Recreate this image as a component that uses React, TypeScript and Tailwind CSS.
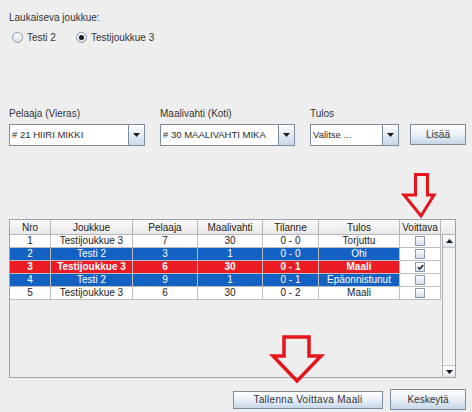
import React from "react";

type Tone = "plain" | "blue" | "red";

interface Shot {
  nro: number;
  team: string;
  player: number;
  keeper: number;
  score: string;
  result: string;
  winner: boolean;
  tone: Tone;
}

const SHOTS: Shot[] = [
  { nro: 1, team: "Testijoukkue 3", player: 7, keeper: 30, score: "0 - 0", result: "Torjuttu", winner: false, tone: "plain" },
  { nro: 2, team: "Testi 2", player: 3, keeper: 1, score: "0 - 0", result: "Ohi", winner: false, tone: "blue" },
  { nro: 3, team: "Testijoukkue 3", player: 6, keeper: 30, score: "0 - 1", result: "Maali", winner: true, tone: "red" },
  { nro: 4, team: "Testi 2", player: 9, keeper: 1, score: "0 - 1", result: "Epäonnistunut", winner: false, tone: "blue" },
  { nro: 5, team: "Testijoukkue 3", player: 6, keeper: 30, score: "0 - 2", result: "Maali", winner: false, tone: "plain" },
];

const HEADERS = ["Nro", "Joukkue", "Pelaaja", "Maalivahti", "Tilanne", "Tulos", "Voittava"];
const WIDTHS = ["w-[41px]", "w-[82px]", "w-[65px]", "w-[65px]", "w-[56px]", "w-[81px]", "w-[41px]"];

const TONE_CLASS: Record<Tone, string> = {
  plain: "bg-white text-[#222]",
  blue: "bg-[#1461c4] text-white",
  red: "bg-[#ec1c24] text-white font-bold",
};

function Triangle({ up = false }: { up?: boolean }) {
  return (
    <svg width="7" height="4" viewBox="0 0 7 4">
      <path d={up ? "M0 4h7L3.5 0z" : "M0 0h7L3.5 4z"} fill="#1a1a1a" />
    </svg>
  );
}

function Combo({ text, width }: { text: string; width: string }) {
  return (
    <div className={`flex h-[22px] ${width} border border-[#7d8c9c] bg-white`}>
      <div className="flex flex-1 items-center overflow-hidden whitespace-nowrap pl-[2px] text-[9.5px] text-[#2a2a2a]">
        {text}
      </div>
      <div className="flex w-[16px] items-center justify-center border-l border-[#7d8c9c] bg-gradient-to-b from-[#ffffff] to-[#c9d8e8]">
        <Triangle />
      </div>
    </div>
  );
}

function Button({ label, className }: { label: string; className: string }) {
  return (
    <div
      className={`flex items-center justify-center border border-[#7d8c9c] bg-gradient-to-b from-[#ffffff] via-[#e9f0f7] to-[#c6d6e7] text-[10px] text-[#333] ${className}`}
    >
      {label}
    </div>
  );
}

function Radio({ checked }: { checked: boolean }) {
  return (
    <div className="flex h-[11px] w-[11px] items-center justify-center rounded-full border border-[#8a9aab] bg-gradient-to-b from-[#ffffff] to-[#d6e0eb]">
      {checked && <div className="h-[5px] w-[5px] rounded-full bg-[#1a1a1a]" />}
    </div>
  );
}

function CheckBox({ checked }: { checked: boolean }) {
  return (
    <div className="flex h-[10px] w-[10px] items-center justify-center border border-[#8a9aab] bg-gradient-to-b from-[#ffffff] to-[#d3deea]">
      {checked && (
        <svg width="7" height="6" viewBox="0 0 7 6">
          <path d="M1 3.2L2.8 5L6.2 1" stroke="#1a1a1a" strokeWidth="1.4" fill="none" />
        </svg>
      )}
    </div>
  );
}

function ShotTable() {
  return (
    <div className="flex h-[159px] w-[447px] flex-col border border-[#9aa3ad] bg-[#eeeeee]">
      {/* header */}
      <div className="flex h-[15px]">
        {HEADERS.map((h, i) => (
          <div
            key={h}
            className={`flex ${WIDTHS[i]} items-center justify-center border-b border-r border-[#b5b5b5] bg-gradient-to-b from-[#fbfbfb] to-[#e8e8e8] text-[10px] text-[#222]`}
          >
            {h}
          </div>
        ))}
        <div className="flex-1 border-b border-[#b5b5b5] bg-gradient-to-b from-[#fbfbfb] to-[#e8e8e8]" />
      </div>

      <div className="flex flex-1">
        {/* rows */}
        <div className="flex w-[431px] flex-col">
          {SHOTS.map((s) => {
            const cells = [String(s.nro), s.team, String(s.player), String(s.keeper), s.score, s.result];
            return (
              <div key={s.nro} className="flex h-[13px]">
                {cells.map((c, i) => (
                  <div
                    key={i}
                    className={`flex ${WIDTHS[i]} items-center justify-center whitespace-nowrap border-b border-r border-[#bdbdbd] text-[10px] leading-none ${TONE_CLASS[s.tone]}`}
                  >
                    {c}
                  </div>
                ))}
                <div className="flex w-[41px] items-center justify-center border-b border-r border-[#bdbdbd] bg-white">
                  <CheckBox checked={s.winner} />
                </div>
              </div>
            );
          })}
        </div>

        {/* scrollbar */}
        <div className="ml-[1px] flex flex-1 flex-col border-l border-[#b0b0b0] bg-[#f3f3f3]">
          <div className="flex h-[13px] items-center justify-center border-b border-[#c4c4c4] bg-gradient-to-b from-[#ffffff] to-[#e2e8ef]">
            <Triangle up />
          </div>
          <div className="flex-1" />
          <div className="flex h-[12px] items-center justify-center border-t border-[#c4c4c4] bg-gradient-to-b from-[#ffffff] to-[#e2e8ef]">
            <Triangle />
          </div>
        </div>
      </div>
    </div>
  );
}

export default function App() {
  return (
    <div className="relative h-[412px] w-[472px] overflow-hidden bg-[#eeeeee] font-['Liberation_Sans',Arial,sans-serif] text-[#333]">
      {/* shooting team */}
      <div className="pl-[9px] pt-[12px] text-[10px] leading-[12px]">Laukaiseva joukkue:</div>
      <div className="mt-[7px] flex h-[12px] items-center pl-[12px] text-[10px]">
        <Radio checked={false} />
        <span className="ml-[4px]">Testi 2</span>
        <div className="ml-[20px]">
          <Radio checked />
        </div>
        <span className="ml-[4px]">Testijoukkue 3</span>
      </div>

      {/* pickers */}
      <div className="mt-[65px] flex pl-[9px]">
        <div className="flex flex-col">
          <div className="text-[10px] leading-[12px]">Pelaaja (Vieras)</div>
          <div className="mt-[4px]">
            <Combo text="# 21 HIIRI MIKKI" width="w-[136px]" />
          </div>
        </div>
        <div className="ml-[15px] flex flex-col">
          <div className="text-[10px] leading-[12px]">Maalivahti (Koti)</div>
          <div className="mt-[4px]">
            <Combo text="# 30 MAALIVAHTI MIKA" width="w-[135px]" />
          </div>
        </div>
        <div className="ml-[15px] flex flex-col">
          <div className="text-[10px] leading-[12px]">Tulos</div>
          <div className="mt-[4px]">
            <Combo text="Valitse ..." width="w-[89px]" />
          </div>
        </div>
        <div className="ml-[11px] flex flex-col justify-end">
          <Button label="Lisää" className="mb-[1px] h-[21px] w-[56px]" />
        </div>
      </div>

      {/* shots */}
      <div className="mt-[73px] pl-[9px]">
        <ShotTable />
      </div>

      {/* actions */}
      <div className="mt-[11px] flex items-center justify-end gap-[7px] pr-[6px]">
        <Button label="Tallenna Voittava Maali" className="h-[18px] w-[150px] tracking-[0.3px]" />
        <Button label="Keskeytä" className="h-[21px] w-[76px]" />
      </div>

      {/* red annotation arrows */}
      <svg className="pointer-events-none absolute left-0 top-0" width="472" height="412">
        <path
          d="M415.5 174.5 H427.5 V195 H434 L421 216 L404 195 H415.5 Z"
          fill="none"
          stroke="#e8141c"
          strokeWidth="3"
          strokeLinejoin="miter"
        />
        <path
          d="M284 337 H309 V356 H321 L297 381 L273 356 H284 Z"
          fill="none"
          stroke="#e8141c"
          strokeWidth="3.5"
          strokeLinejoin="miter"
        />
      </svg>
    </div>
  );
}
